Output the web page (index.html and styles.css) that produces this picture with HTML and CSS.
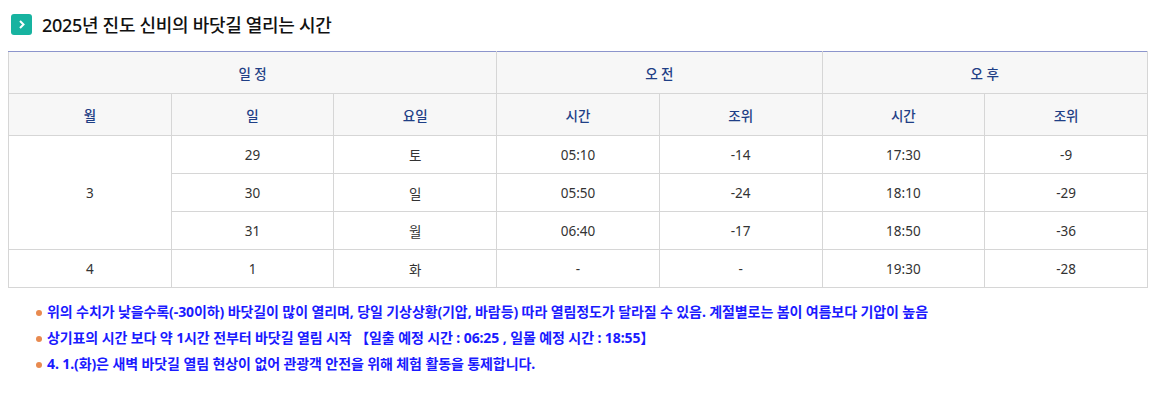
FILE: index.html
```html
<!DOCTYPE html>
<html lang="ko">
<head>
<meta charset="utf-8">
<link rel="stylesheet" href="styles.css">
</head>
<body>
<div class="page">
  <h2 class="title"><span class="ico"><svg width="21" height="21" viewBox="0 0 21 21"><path d="M9 7l3.5 3.5L9 14" fill="none" stroke="#fff" stroke-width="2"/></svg></span>2025년 진도 신비의 바닷길 열리는 시간</h2>
  <table class="tide">
    <colgroup><col><col><col><col><col><col><col></colgroup>
    <thead>
      <tr class="h1"><th colspan="3">일 정</th><th colspan="2">오 전</th><th colspan="2">오 후</th></tr>
      <tr class="h2"><th>월</th><th>일</th><th>요일</th><th>시간</th><th>조위</th><th>시간</th><th>조위</th></tr>
    </thead>
    <tbody>
      <tr><td rowspan="3">3</td><td>29</td><td>토</td><td>05:10</td><td>-14</td><td>17:30</td><td>-9</td></tr>
      <tr><td>30</td><td>일</td><td>05:50</td><td>-24</td><td>18:10</td><td>-29</td></tr>
      <tr><td>31</td><td>월</td><td>06:40</td><td>-17</td><td>18:50</td><td>-36</td></tr>
      <tr><td>4</td><td>1</td><td>화</td><td>-</td><td>-</td><td>19:30</td><td>-28</td></tr>
    </tbody>
  </table>
  <ul class="notes">
    <li>위의 수치가 낮을수록(-30이하) 바닷길이 많이 열리며, 당일 기상상황(기압, 바람등) 따라 열림정도가 달라질 수 있음. 계절별로는 봄이 여름보다 기압이 높음</li>
    <li>상기표의 시간 보다 약 1시간 전부터 바닷길 열림 시작 【일출 예정 시간 : 06:25 , 일몰 예정 시간 : 18:55】</li>
    <li>4. 1.(화)은 새벽 바닷길 열림 현상이 없어 관광객 안전을 위해 체험 활동을 통제합니다.</li>
  </ul>
</div>
</body>
</html>
```
FILE: styles.css
```css
html, body { margin: 0; padding: 0; background: #fff; }
body { font-family: "Noto Sans", "Noto Sans CJK KR", sans-serif; color: #333; }
.page { padding: 12px 16px 0 8px; }
.title {
  display: flex; align-items: center; gap: 10px;
  margin: 0 0 15px 3px; font-size: 18px; font-weight: 500; color: #111;
  height: 24px; letter-spacing: -0.3px;
}
.ico {
  display: inline-flex; width: 21px; height: 21px; border-radius: 3px;
  background: #17b3a0;
}
.tide {
  width: 1140px; border-collapse: collapse; table-layout: fixed;
  border-top: 1px solid #8c95cc; font-size: 13.5px;
}
.tide th, .tide td {
  border: 1px solid #d6d6d6; text-align: center; padding: 0;
}
.tide thead tr:first-child th { border-top: 1px solid #8c95cc; }
.tide th { background: #f7f7f7; color: #1f3f86; font-weight: 500; height: 41px; }
.tide td { height: 37px; color: #333; }
.notes { list-style: none; margin: 11px 0 0 0; padding: 0 0 0 28px; }
.notes li {
  position: relative; padding-left: 11px; color: #1a1aff; font-weight: 700;
  font-size: 14px; line-height: 26px; letter-spacing: -0.1px;
}
.notes li::before {
  content: ""; position: absolute; left: 0; top: 11px; width: 6px; height: 6px;
  border-radius: 50%; background: #e88a4f;
}
```
